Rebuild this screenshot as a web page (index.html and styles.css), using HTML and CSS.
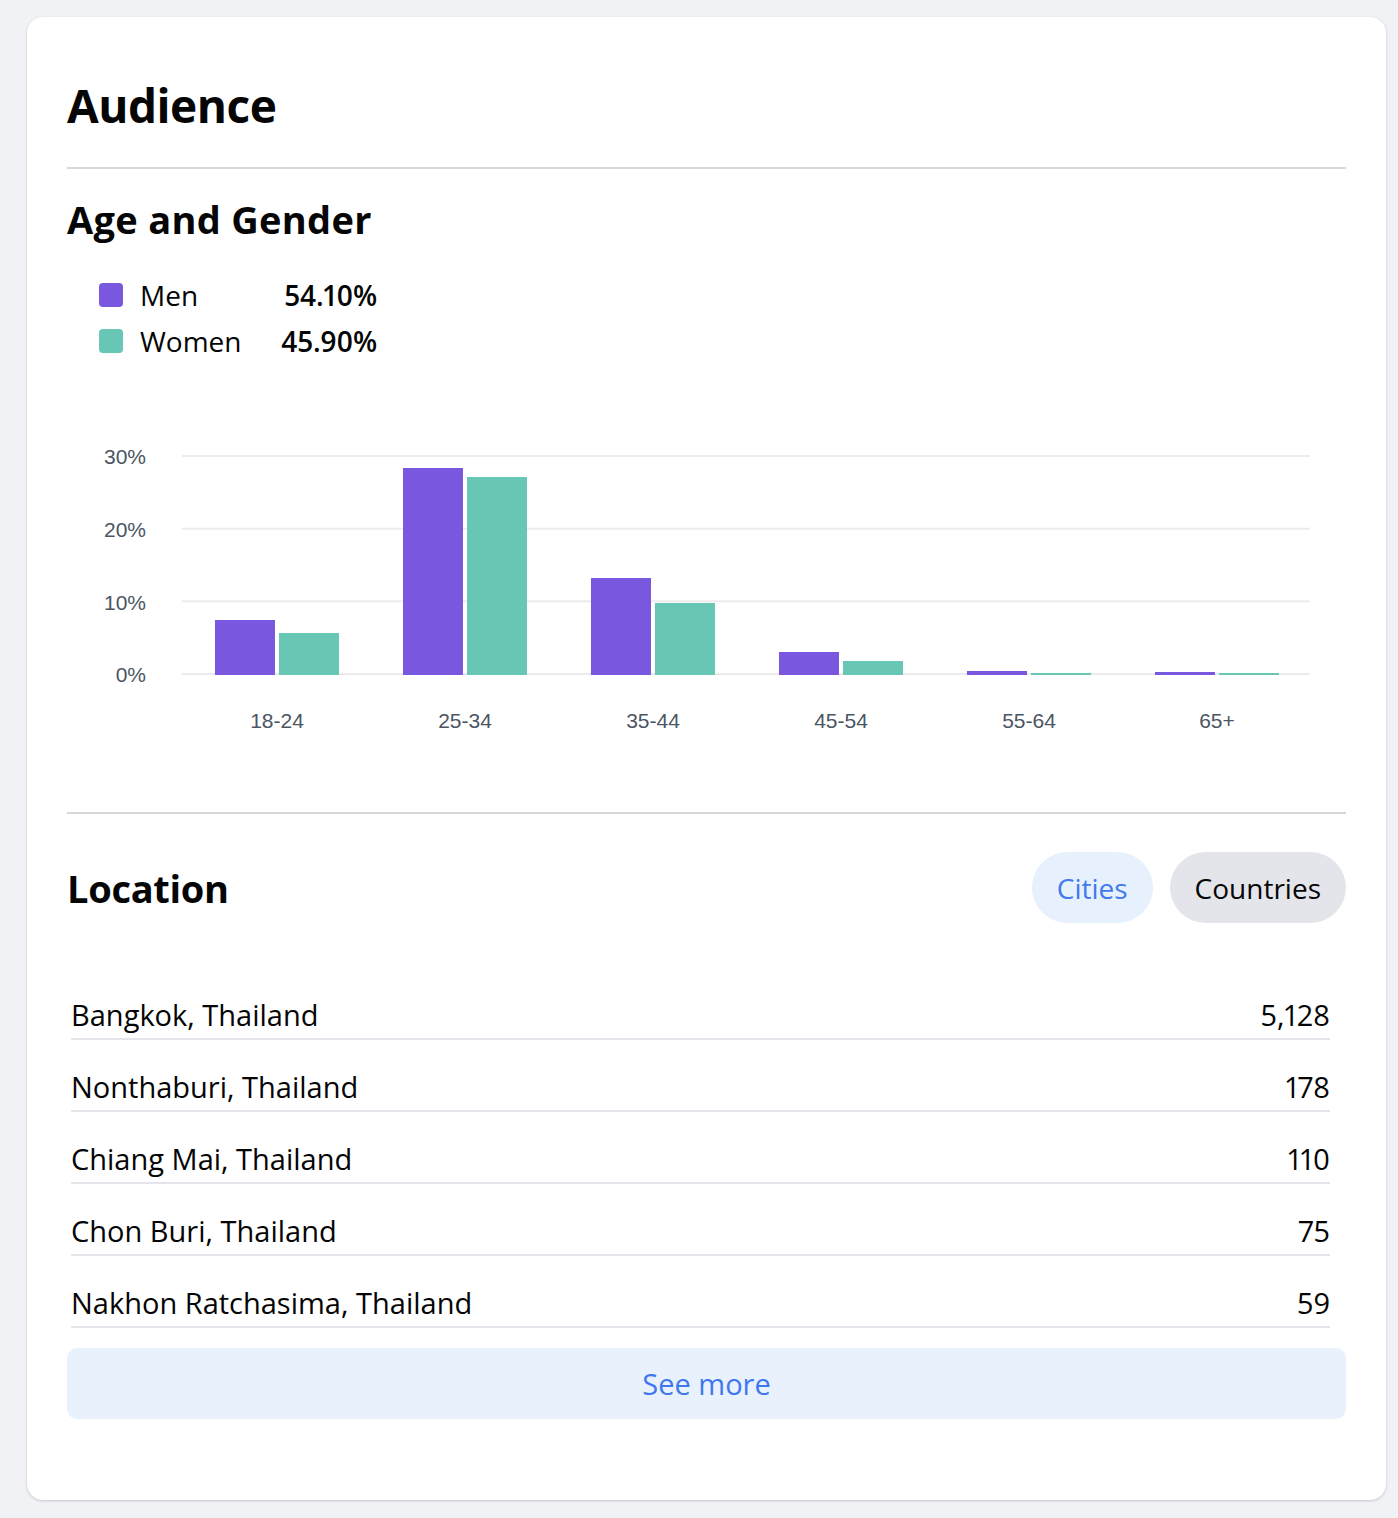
FILE: index.html
```html
<!DOCTYPE html>
<html lang="en">
<head>
<meta charset="utf-8">
<title>Audience</title>
<link rel="stylesheet" href="styles.css">
</head>
<body>
<main class="card">
  <h1 class="title">Audience</h1>
  <hr class="divider divider-top">

  <section class="age">
    <h2 class="section-title age-title">Age and Gender</h2>
    <div class="legend">
      <div class="legend-row">
        <span class="swatch swatch-men"></span>
        <span class="legend-label">Men</span>
        <span class="legend-value">54.10%</span>
      </div>
      <div class="legend-row">
        <span class="swatch swatch-women"></span>
        <span class="legend-label">Women</span>
        <span class="legend-value">45.90%</span>
      </div>
    </div>

    <svg class="chart" width="1279" height="340" viewBox="0 0 1279 340">
      <g class="grid">
        <line x1="115" y1="36" x2="1243" y2="36"/>
        <line x1="115" y1="108.7" x2="1243" y2="108.7"/>
        <line x1="115" y1="181.3" x2="1243" y2="181.3"/>
        <line x1="115" y1="254" x2="1243" y2="254"/>
      </g>
      <g class="axis-y">
        <text x="79" y="44">30%</text>
        <text x="79" y="117">20%</text>
        <text x="79" y="190">10%</text>
        <text x="79" y="262">0%</text>
      </g>
      <g class="bars-men">
        <rect x="148" y="200" width="60" height="55"/>
        <rect x="336" y="48" width="60" height="207"/>
        <rect x="524" y="158" width="60" height="97"/>
        <rect x="712" y="232" width="60" height="23"/>
        <rect x="900" y="251" width="60" height="4"/>
        <rect x="1088" y="252" width="60" height="3"/>
      </g>
      <g class="bars-women">
        <rect x="212" y="213" width="60" height="42"/>
        <rect x="400" y="57" width="60" height="198"/>
        <rect x="588" y="183" width="60" height="72"/>
        <rect x="776" y="241" width="60" height="14"/>
        <rect x="964" y="253" width="60" height="2"/>
        <rect x="1152" y="253" width="60" height="2"/>
      </g>
      <g class="axis-x">
        <text x="210" y="308">18-24</text>
        <text x="398" y="308">25-34</text>
        <text x="586" y="308">35-44</text>
        <text x="774" y="308">45-54</text>
        <text x="962" y="308">55-64</text>
        <text x="1150" y="308">65+</text>
      </g>
    </svg>
  </section>

  <hr class="divider divider-mid">

  <section class="location">
    <div class="location-head">
      <h2 class="section-title">Location</h2>
      <div class="tabs">
        <button class="tab tab-active" type="button">Cities</button>
        <button class="tab tab-muted" type="button">Countries</button>
      </div>
    </div>
    <ul class="loc-list">
      <li class="loc-row"><span>Bangkok, Thailand</span><span class="loc-num">5,128</span></li>
      <li class="loc-row"><span>Nonthaburi, Thailand</span><span class="loc-num">178</span></li>
      <li class="loc-row"><span>Chiang Mai, Thailand</span><span class="loc-num">110</span></li>
      <li class="loc-row"><span>Chon Buri, Thailand</span><span class="loc-num">75</span></li>
      <li class="loc-row"><span>Nakhon Ratchasima, Thailand</span><span class="loc-num">59</span></li>
    </ul>
    <button class="see-more" type="button">See more</button>
  </section>
</main>
</body>
</html>
```
FILE: styles.css
```css
* { box-sizing: border-box; }

html, body {
  margin: 0;
  background: #f0f2f5;
}

body {
  padding: 17px 12px 18px 27px;
  font-family: "Open Sans", "Noto Sans", sans-serif;
  color: #050505;
}

.card {
  background: #ffffff;
  border-radius: 16px;
  box-shadow: 0 1px 3px rgba(0, 0, 0, 0.18);
  padding: 60px 40px 81px 40px;
  min-height: 1483px;
}

.title {
  margin: 0;
  font-size: 46px;
  line-height: 56px;
  font-weight: 700;
  letter-spacing: -0.5px;
}

.divider {
  border: 0;
  height: 2px;
  background: #d6d6db;
  margin: 0;
}

.divider-top { margin-top: 34px; }
.divider-mid { margin-top: 52px; }

.section-title {
  margin: 0;
  font-size: 38px;
  line-height: 46px;
  font-weight: 700;
  letter-spacing: -0.3px;
}

.age-title {
  margin-top: 27px;
  letter-spacing: 0.3px;
}

.legend {
  margin: 30px 0 0 32px;
}

.legend-row {
  display: flex;
  align-items: center;
  height: 46px;
  font-size: 28px;
}

.swatch {
  width: 24px;
  height: 24px;
  border-radius: 4px;
  margin-right: 17px;
  flex: none;
}

.swatch-men { background: #7a57df; }
.swatch-women { background: #68c6b4; }

.legend-label { width: 140px; }

.legend-value {
  width: 97px;
  text-align: right;
  font-weight: 550;
  font-variant-numeric: proportional-nums;
  letter-spacing: -0.2px;
}

.chart {
  display: block;
  margin-top: 56px;
}

.grid line {
  stroke: #ececec;
  stroke-width: 2;
}

.axis-y text {
  font-family: "Liberation Sans", Arial, sans-serif;
  font-size: 21px;
  fill: #4b5563;
  text-anchor: end;
}

.axis-x text {
  font-family: "Liberation Sans", Arial, sans-serif;
  font-size: 21px;
  fill: #4b5563;
  text-anchor: middle;
}

.bars-men rect { fill: #7a57df; }
.bars-women rect { fill: #68c6b4; }

.location-head {
  display: flex;
  justify-content: space-between;
  align-items: center;
  margin-top: 38px;
  height: 71px;
}

.tabs {
  display: flex;
  gap: 17px;
}

.tab {
  height: 71px;
  padding: 0 25px;
  border: 0;
  border-radius: 36px;
  font-family: inherit;
  font-size: 28px;
  font-weight: 500;
  cursor: pointer;
}

.tab-active {
  background: #e7f0fd;
  color: #4379ef;
}

.tab-muted {
  background: #e4e5ea;
  color: #050505;
}

.loc-list {
  list-style: none;
  margin: 45px 16px 0 4px;
  padding: 0;
}

.loc-row {
  display: flex;
  justify-content: space-between;
  padding: 27px 0 3px 0;
  font-size: 29px;
  line-height: 40px;
  font-weight: 500;
  border-bottom: 2px solid #e4e4ea;
}

.loc-num {
  font-variant-numeric: proportional-nums;
}

.see-more {
  display: block;
  width: 100%;
  height: 71px;
  margin-top: 20px;
  border: 0;
  border-radius: 10px;
  background: #e8f1fc;
  color: #3f78ec;
  font-family: inherit;
  font-size: 29px;
  font-weight: 500;
  cursor: pointer;
}
```
